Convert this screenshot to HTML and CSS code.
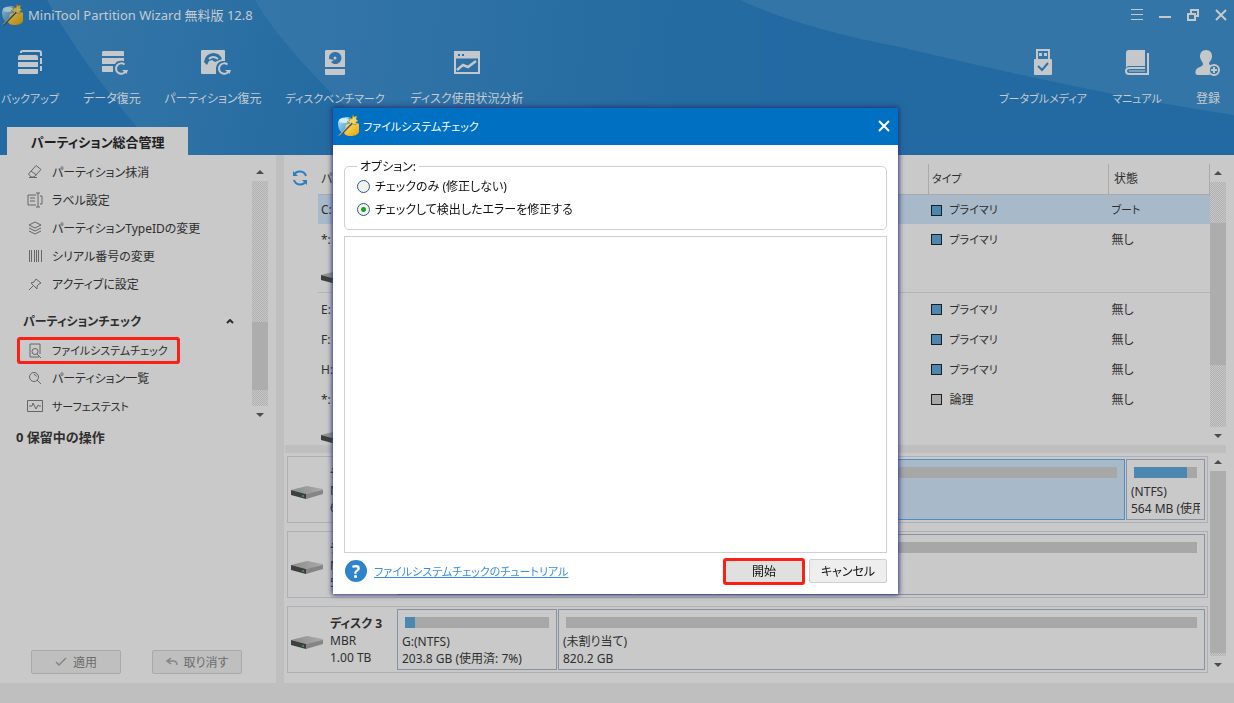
FILE: index.html
```html
<!DOCTYPE html>
<html lang="ja">
<head>
<meta charset="utf-8">
<title>MiniTool Partition Wizard</title>
<link rel="stylesheet" href="styles.css">
</head>
<body>
<svg width="0" height="0" class="defs" aria-hidden="true">
  <defs>
    <linearGradient id="gold" x1="0" y1="0" x2="1" y2="1"><stop offset="0" stop-color="#ffe37a"/><stop offset="1" stop-color="#e6a400"/></linearGradient>
    <linearGradient id="ice" x1="0" y1="0" x2="1" y2="1"><stop offset="0" stop-color="#b9e4f7"/><stop offset="1" stop-color="#2f8fca"/></linearGradient>
    <linearGradient id="lid" x1="0" y1="0" x2="1" y2="0"><stop offset="0" stop-color="#8c8c8c"/><stop offset="1" stop-color="#ababab"/></linearGradient>
    <symbol id="logo" viewBox="0 0 22 22">
      <path d="M0 8c0-4 5-6 10-6l3 1v6l-4 8H3c-2-2-3-5-3-9z" fill="url(#ice)"/>
      <ellipse cx="6" cy="5.500" rx="5" ry="2.500" fill="#cfeefa"/>
      <path d="M8 10c3-2 11-3 13-1v8c-1 3-5 4-9 4-3 0-5-1-6-3z" fill="url(#gold)"/>
      <path d="M15 0l1 2 3-1-1 3 2 2-2 1v3l-3-1-4 2 1-3-3-1 3-2-1-2 3 1z" fill="#ead66a" stroke="#a8851c" stroke-width=".6"/>
      <path d="M1.500 21L14 8" stroke="#55554c" stroke-width="2"/>
      <path d="M1 20.500L13.500 7.500" stroke="#dcdcd2" stroke-width=".9"/>
    </symbol>
    <symbol id="drive" viewBox="0 0 32 13">
      <path d="M0 4L16 0l16 3v2L15 8z" fill="url(#lid)"/>
      <path d="M0 4l15 4v5L0 9z" fill="#3d3f3e"/>
      <path d="M15 8l17-4v4l-17 5z" fill="#858585"/>
      <path d="M12 9v2" stroke="#37a84c" stroke-width="1.500"/>
    </symbol>
    <symbol id="redo" viewBox="0 0 14 14">
      <path d="M10.500 2.500A5.200 5.200 0 1 0 11.500 9.500" fill="none" stroke="#c5c8cb" stroke-width="2"/>
      <path d="M8 8h6l-1.500 4z" fill="#c5c8cb"/>
    </symbol>
    <symbol id="up" viewBox="0 0 8 4"><path d="M0 4L4 0l4 4z" fill="#4c4c4c"/></symbol>
    <symbol id="down" viewBox="0 0 8 4"><path d="M0 0h8L4 4z" fill="#4c4c4c"/></symbol>
  </defs>
</svg>

<div class="app">
  <header class="header">
    <svg class="swoosh" viewBox="0 0 1234 155" preserveAspectRatio="none" aria-hidden="true">
      <defs>
        <linearGradient id="s1" gradientUnits="userSpaceOnUse" x1="60" y1="0" x2="340" y2="60"><stop offset="0" stop-color="#3475a6"/><stop offset=".4" stop-color="#2f72a5"/><stop offset="1" stop-color="#246ba1"/></linearGradient>
        <linearGradient id="s2" gradientUnits="userSpaceOnUse" x1="270" y1="0" x2="680" y2="40"><stop offset="0" stop-color="#3576a8"/><stop offset="1" stop-color="#246ba1"/></linearGradient>
      </defs>
      <path d="M47 0Q80 60 137 127L170 155H760V0z" fill="url(#s1)"/>
      <path d="M255 0Q285 52 375 135L400 155H760V0z" fill="url(#s2)"/>
      <path d="M740 0Q800 28 900 47Q1100 95 1234 115V0z" fill="#3375a6"/>
    </svg>
    <div class="titlebar">
      <svg class="logo dim"><use href="#logo"/></svg>
      <h1 class="app-title">MiniTool Partition Wizard 無料版 12.8</h1>
      <div class="window-buttons">
        <button class="win" aria-label="メニュー"><svg width="12" height="12"><path d="M0 .5h12M0 5.500h12M0 10.500h12" stroke="#c5c9cc"/></svg></button>
        <button class="win" aria-label="最小化"><svg width="12" height="12"><path d="M0 8h12" stroke="#c8c8c8" stroke-width="2"/></svg></button>
        <button class="win" aria-label="元に戻す"><svg width="12" height="12" fill="none" stroke="#c8c8c8" stroke-width="2"><path d="M1 5h7v6H1zM4 4V1h7v6H9"/></svg></button>
        <button class="win" aria-label="閉じる"><svg width="12" height="12"><path d="M1 1l10 10M11 1L1 11" stroke="#c8c8c8" stroke-width="2"/></svg></button>
      </div>
    </div>
    <nav class="toolbar">
      <button class="tool t-backup kana"><svg width="26" height="28" fill="#c5c8cb"><path d="M3 6h16q2 0 2 2v3H1V8q0-2 2-2zM1 13h20v5H1zM1 20h20v4q0 1-1 1H2q-1 0-1-1z"/><path d="M4 4V3q0-1 2-1h16q2 0 2 2v3M24 9v6M24 17v5" fill="none" stroke="#c5c8cb" stroke-width="2"/></svg><span>バックアップ</span></button>
      <button class="tool t-data"><svg width="28" height="28" fill="#c5c8cb"><path d="M2 2h20q1 0 1 1v4H1V3zM1 9h22v3q-7-1-9 3H1zM1 17h11v6H2q-1 0-1-1z"/><use href="#redo" x="13" y="13" width="14" height="14"/></svg><span>データ復元</span></button>
      <button class="tool t-part"><svg width="32" height="28" fill="#c5c8cb"><path fill-rule="evenodd" d="M2 1h22q1 0 1 1v10q-8-1-9 7v6H2q-1 0-1-1V2zM4 13q1-8 9-9 7 0 9 6l-7 3-3-2-3 1-2 4z"/><path d="M9 10q4-4 9 0" fill="none" stroke="#c5c8cb" stroke-width="2"/><use href="#redo" x="17" y="13" width="14" height="14"/></svg><span>パーティション復元</span></button>
      <button class="tool t-bench kana"><svg width="20" height="28" fill="#c5c8cb"><path fill-rule="evenodd" d="M1 1h18q1 0 1 1v16H0V2zM10 3a6 6 0 1 1-4 10l3-2-5-1a6 6 0 0 1 6-7z"/><circle cx="10" cy="9" r="1.500"/><path d="M0 20h20v5q0 1-1 1H1q-1 0-1-1z"/></svg><span>ディスクベンチマーク</span></button>
      <button class="tool t-usage"><svg width="26" height="28" fill="none" stroke="#c5c8cb"><rect x="1" y="3" width="24" height="21" stroke-width="2"/><path d="M1 6h24" stroke-width="7"/><path d="M3 21l6-5 5 2 8-6" stroke-width="2.500"/><path d="M4 6h2M8 6h2" stroke="#2c70a4" stroke-width="2"/></svg><span>ディスク使用状況分析</span></button>
      <button class="tool t-media kana"><svg width="20" height="28" fill="#c5c8cb"><path fill-rule="evenodd" d="M3 0h14v10h1q1 0 1 1v14q0 1-1 1H2q-1 0-1-1V11q0-1 1-1h1zM5 2v8h10V2z"/><path d="M6 4h3v3H6zM11 4h3v3h-3z"/><path d="M5 17l4 4 6-7" fill="none" stroke="#2f73a5" stroke-width="2"/></svg><span>ブータブルメディア</span></button>
      <button class="tool t-manual kana"><svg width="24" height="28" fill="none" stroke="#c5c8cb"><path fill="#c5c8cb" stroke="none" d="M4 1h16v16H4q-3 0-3 3V4q0-3 3-3z"/><path d="M23 4v21H4q-3 0-3-3 0-3 4-3h15" stroke-width="2"/><path d="M4 22h16" stroke-width="1"/></svg><span>マニュアル</span></button>
      <button class="tool t-login"><svg width="26" height="28" fill="#c5c8cb"><path d="M11 1c4 0 6 3 6 6 0 4-2 5-3 7 0 2 2 3 4 3-4 2-5 6-3 9H3c-3 0-3-3-2-5 1-3 7-3 7-6 0-2-3-4-3-8 0-3 2-6 6-6z"/><circle cx="19" cy="21" r="5" fill="#3375a6" stroke="#c5c8cb" stroke-width="2"/><path d="M16 21h6M19 18v6" stroke="#c5c8cb" stroke-width="2"/></svg><span>登録</span></button>
    </nav>
    <div class="tab">パーティション総合管理</div>
  </header>

  <div class="workspace">
    <aside class="sidebar">
      <div class="side-scroll">
        <ul class="menu">
          <li><button class="item"><svg class="ico" viewBox="0 0 16 16"><path d="M1.500 10L9 1.500l5 4L7 13H4zM4 7l5.500 4M2 13.500h8"/></svg>パーティション抹消</button></li>
          <li><button class="item"><svg class="ico" viewBox="0 0 16 16"><path d="M9 3H1v10h8M3 6h5M3 9h5M11 1v14M9 1h4M9 15h4M13 4h2v8h-2"/></svg>ラベル設定</button></li>
          <li><button class="item"><svg class="ico" viewBox="0 0 16 16"><path d="M2 5l6-3 6 3-6 3zM2 8l6 3 6-3M2 11l6 3 6-3"/></svg>パーティションTypeIDの変更</button></li>
          <li><button class="item"><svg class="ico" viewBox="0 0 16 16"><path d="M2.500 2v12M4.500 2v12M7.500 2v12M9.500 2v12M11.500 2v12M14.500 2v12"/></svg>シリアル番号の変更</button></li>
          <li><button class="item"><svg class="ico" viewBox="0 0 16 16"><path d="M9 3l5 4-2 1-2 2v3L4 7l3-1zM6 10l-4 4"/></svg>アクティブに設定</button></li>
        </ul>
        <h2 class="group">パーティションチェック<svg width="8" height="5"><path d="M1 4l3-3 3 3" fill="none" stroke="#2e2e2e" stroke-width="2"/></svg></h2>
        <ul class="menu">
          <li><button class="item marked kana"><svg class="ico" viewBox="0 0 16 16"><path d="M12 14H3V1h10v10"/><circle cx="8" cy="8.500" r="3"/><path d="M10 11l4 4"/></svg>ファイルシステムチェック</button></li>
          <li><button class="item"><svg class="ico" viewBox="0 0 16 16"><circle cx="7" cy="7" r="4.500"/><path d="M10 10l4 4M7 4.500a3 3 0 0 1 2.500 2"/></svg>パーティション一覧</button></li>
          <li><button class="item kana"><svg class="ico" viewBox="0 0 16 16"><path d="M.5 2.500h15v11H.5zM2 8h3l1-3 3 6 2-4 1 1h2"/></svg>サーフェステスト</button></li>
        </ul>
        <div class="scrollbar sb-side"><svg class="arr"><use href="#up"/></svg><div class="track"><i class="gap-a"></i><i class="thumb"></i><i class="gap-b"></i></div><svg class="arr"><use href="#down"/></svg></div>
      </div>
      <p class="pending">0 保留中の操作</p>
      <div class="side-actions">
        <button class="flat" disabled><svg width="12" height="10"><path d="M1 5l3 3 7-7" fill="none" stroke="#858585" stroke-width="1.500"/></svg>適用</button>
        <button class="flat" disabled><svg width="12" height="10"><path d="M5 1L1 4l4 3M1 4h6q4 0 4 4" fill="none" stroke="#858585" stroke-width="1.500"/></svg>取り消す</button>
      </div>
    </aside>
    <div class="v-split"></div>

    <main class="content">
      <section class="list-pane">
        <button class="refresh" aria-label="更新"><svg width="18" height="18" fill="none" stroke="#2c7fbf" stroke-width="2"><path d="M15 7A6.500 6.500 0 0 0 3 6M3 11a6.500 6.500 0 0 0 12 1"/><path d="M2 2v5h5zM16 16v-5h-5z" fill="#2c7fbf" stroke="none"/></svg></button>
        <table class="parts">
          <thead><tr><th class="c1">パーティション</th><th class="c2 kana">タイプ</th><th class="c3">状態</th></tr></thead>
          <tbody>
            <tr class="sel"><td>C:</td><td class="kana"><i class="sq"></i>プライマリ</td><td class="kana">ブート</td></tr>
            <tr><td>*:</td><td class="kana"><i class="sq"></i>プライマリ</td><td>無し</td></tr>
            <tr class="disk-row"><td colspan="3"><svg class="drive"><use href="#drive"/></svg></td></tr>
            <tr><td>E:</td><td class="kana"><i class="sq"></i>プライマリ</td><td>無し</td></tr>
            <tr><td>F:</td><td class="kana"><i class="sq"></i>プライマリ</td><td>無し</td></tr>
            <tr><td>H:</td><td class="kana"><i class="sq"></i>プライマリ</td><td>無し</td></tr>
            <tr><td>*:</td><td><i class="sq grey"></i>論理</td><td>無し</td></tr>
            <tr class="disk-row last"><td colspan="3"><svg class="drive"><use href="#drive"/></svg></td></tr>
          </tbody>
        </table>
        <div class="scrollbar sb-list"><svg class="arr"><use href="#up"/></svg><div class="track"><i class="gap-a"></i><i class="thumb"></i><i class="gap-b"></i></div><svg class="arr"><use href="#down"/></svg></div>
      </section>
      <div class="h-split"></div>
      <section class="map-pane">
        <div class="disks">
          <article class="disk">
            <svg class="drive"><use href="#drive"/></svg>
            <div class="disk-info"><b>ディスク 1</b><span>MBR</span><span>60.00 GB</span></div>
            <div class="map m1">
              <div class="part active"><div class="bar"></div></div>
              <div class="part"><div class="bar"><i style="width:84%"></i></div><span>(NTFS)</span><span>564 MB (使用済: 84%)</span></div>
            </div>
          </article>
          <article class="disk">
            <svg class="drive"><use href="#drive"/></svg>
            <div class="disk-info"><b>ディスク 2</b><span>MBR</span><span>500.00 GB</span></div>
            <div class="map m2">
              <div class="part"><div class="bar"></div></div><div class="part"><div class="bar"></div></div><div class="part"><div class="bar"></div></div><div class="part"><div class="bar"></div></div>
            </div>
          </article>
          <article class="disk">
            <svg class="drive"><use href="#drive"/></svg>
            <div class="disk-info"><b>ディスク 3</b><span>MBR</span><span>1.00 TB</span></div>
            <div class="map m3">
              <div class="part"><div class="bar"><i style="width:7%"></i></div><span>G:(NTFS)</span><span>203.8 GB (使用済: 7%)</span></div>
              <div class="part"><div class="bar"></div><span>(未割り当て)</span><span>820.2 GB</span></div>
            </div>
          </article>
        </div>
        <div class="scrollbar sb-map"><svg class="arr"><use href="#up"/></svg><div class="track"><i class="thumb"></i><i class="gap-b"></i></div><svg class="arr"><use href="#down"/></svg></div>
      </section>
    </main>
  </div>
  <footer class="status"></footer>
</div>

<div class="overlay">
  <div class="dialog" role="dialog" aria-labelledby="dlg-title">
    <div class="dlg-bar">
      <svg class="logo"><use href="#logo"/></svg>
      <h2 id="dlg-title" class="kana">ファイルシステムチェック</h2>
      <button class="win" aria-label="閉じる"><svg width="12" height="12"><path d="M1 1l10 10M11 1L1 11" stroke="#fff" stroke-width="2"/></svg></button>
    </div>
    <form class="dlg-body">
      <fieldset class="options">
        <legend>オプション:</legend>
        <label><input type="radio" name="mode">チェックのみ (修正しない)</label>
        <label><input type="radio" name="mode" checked>チェックして検出したエラーを修正する</label>
      </fieldset>
      <textarea class="log" readonly aria-label="ログ"></textarea>
      <div class="dlg-foot">
        <span class="help" aria-hidden="true">?</span>
        <a href="#" class="kana">ファイルシステムチェックのチュートリアル</a>
        <button type="button" class="btn primary">開始</button>
        <button type="button" class="btn">キャンセル</button>
      </div>
    </form>
  </div>
</div>
</body>
</html>
```
FILE: styles.css
```css
* { box-sizing: border-box; }
html, body { height: 100%; margin: 0; }
body {
  font: 12px/17px "Noto Sans", "Noto Sans CJK JP", sans-serif;
  font-feature-settings: "palt";
  color: #2e2e2e;
  background: #c9c9c9;
  overflow: hidden;
}
button, input, textarea { font: inherit; font-feature-settings: inherit; color: inherit; margin: 0; }
button { background: none; border: 0; padding: 0; white-space: nowrap; }
h1, h2, p, ul { margin: 0; padding: 0; font-size: inherit; list-style: none; }
svg { display: block; flex: none; }
i { display: block; }
.defs { position: absolute; }
.kana { font-size: 11px; }

.app { display: flex; flex-direction: column; height: 100vh; }

.header { position: relative; display: flex; flex-direction: column; flex: none; height: 155px; background: #236aa2; color: #c5cbd0; }
.swoosh { position: absolute; inset: 0; width: 100%; height: 100%; }
.titlebar, .toolbar, .tab { position: relative; }
.titlebar { display: flex; align-items: center; height: 30px; padding: 0 7px 0 2px; gap: 4px; }
.logo { width: 22px; height: 22px; }
.dim { filter: brightness(.8); }
.app-title { font-size: 13px; font-weight: 400; }
.window-buttons { display: flex; gap: 16px; margin-left: auto; }
.win { display: grid; place-items: center; width: 12px; height: 20px; }

.toolbar { display: flex; flex: 1; }
.tool { display: flex; flex-direction: column; align-items: center; justify-content: flex-start; padding-top: 19px; gap: 13px; flex: none; }
.t-backup { width: 60px; }
.t-data { width: 104px; }
.t-part { width: 98px; }
.t-data svg, .t-part svg { margin-left: 6px; }
.t-bench { width: 146px; }
.t-usage { width: 118px; }
.t-media { width: 98px; margin-left: auto; }
.t-manual { width: 90px; }
.t-login { width: 52px; }

.tab { align-self: flex-start; margin-left: 7px; height: 28px; padding-left: 24px; width: 181px; background: #c9c9c9; color: #1f1f1f; font-size: 13px; font-weight: 700; line-height: 30px; white-space: nowrap; }

.workspace { display: flex; flex: 1; min-height: 0; }
.sidebar { display: flex; flex-direction: column; width: 276px; flex: none; }
.side-scroll { position: relative; padding: 3px 36px 0 17px; height: 269px; }
.item { display: flex; align-items: center; gap: 9px; width: 100%; height: 28px; padding: 0 10px; text-align: left; }
.item.marked { width: 163px; height: 27px; padding: 0 7px; border: 3px solid #fb2015; border-radius: 3px; }
.ico { width: 16px; height: 16px; fill: none; stroke: #666; }
.group { display: flex; justify-content: space-between; align-items: center; height: 39px; padding: 8px 6px 0 6px; font-weight: 700; }

.scrollbar { display: flex; flex-direction: column; align-items: center; width: 16px; }
.arr { width: 8px; height: 4px; margin: 7px 0; }
.track { display: flex; flex-direction: column; flex: 1; width: 100%; background: repeating-conic-gradient(#b1b1b1 0 25%, #c6c6c6 0 50%) 0 0 / 2px 2px; }
.thumb { background: #adadad; }
.sb-side { position: absolute; right: 8px; top: 8px; bottom: 0; }
.sb-side .gap-a { flex: 140; } .sb-side .thumb { flex: 67; } .sb-side .gap-b { flex: 16; }
.sb-list .gap-a { flex: 41; } .sb-list .thumb { flex: 142; } .sb-list .gap-b { flex: 62; }
.sb-map .thumb { flex: 181; } .sb-map .gap-b { flex: 3; }

.pending { padding: 5px 16px; font-size: 13px; font-weight: 700; }
.side-actions { display: flex; gap: 31px; margin-top: auto; padding: 0 31px 9px; }
.flat { display: flex; align-items: center; justify-content: center; gap: 6px; width: 90px; height: 24px; background: #bfbfbf; border: 1px solid #a9a9a9; border-radius: 2px; color: #6c6c6c; }
.v-split { width: 8px; flex: none; background: #bfbfbf; }

.content { display: flex; flex-direction: column; flex: 1; min-width: 0; padding: 0 8px 0 1px; }
.list-pane { display: flex; height: 290px; flex: none; padding-top: 9px; overflow: hidden; }
.refresh { width: 18px; height: 18px; margin: 5px 9px 0 6px; flex: none; }
.parts { flex: 1; width: 0; height: 0; border-collapse: collapse; table-layout: fixed; }
.parts th { height: 30px; padding: 0 3px; font-weight: 400; text-align: left; border-right: 1px solid #aaa; border-bottom: 1px solid #aaa; }
.parts .c2 { width: 180px; } .parts .c3 { width: 101px; padding-left: 5px; }
.parts td { height: 30px; padding: 1px 3px 0; }
.parts td + td { padding-left: 21px; position: relative; }
.parts td + td + td { padding-left: 3px; }
.parts .sel { background: #a8b9ca; }
.parts .disk-row td { height: 40px; padding: 6px 3px 0; background: linear-gradient(#b5b5b5, #b5b5b5) 0 38px / 100% 1px no-repeat; }
.parts .last td { background: none; }
.drive { width: 32px; height: 13px; }
.sq { position: absolute; left: 2px; top: 10px; width: 11px; height: 11px; border: 1px solid #1e1e1e; background: #4b87b0; }
.sq.grey { background: #a7a7a7; }
.sb-list, .sb-side, .sb-map { flex: none; }

.h-split { height: 8px; background: #bfbfbf; flex: none; }
.map-pane { display: flex; flex: 1; gap: 2px; padding: 0 0 9px 2px; }
.disks { display: flex; flex-direction: column; gap: 8px; flex: 1; min-width: 0; padding-top: 3px; }
.disk { display: flex; align-items: center; height: 67px; padding: 2px; border: 1px solid #adb0b7; }
.disk .drive { margin: 6px 7px 0 1px; }
.disk-info { display: flex; flex-direction: column; width: 67px; padding-top: 2px; flex: none; white-space: nowrap; }
.map { display: grid; gap: 1px; flex: 1; height: 61px; min-width: 0; }
.m1 { grid-template-columns: 1fr 79px; }
.m2 { grid-template-columns: 156px 79px 79px 1fr; }
.m3 { grid-template-columns: 160px 1fr; }
.part { display: flex; flex-direction: column; min-width: 0; padding: 7px 4px 0; border: 1px solid #8892a0; }
.part.active { background: #a8b9ca; border-color: #4a8fc6; }
.part span { overflow: hidden; white-space: nowrap; }
.bar { height: 11px; margin: 0 3px 5px; background: #a7a7a7; }
.bar i { height: 100%; background: #4b87b0; }

.status { height: 20px; flex: none; background: #bfbfbf; }

.overlay { position: fixed; inset: 0; display: grid; place-items: center; padding: 0 3px 2px 0; }
.dialog { display: flex; flex-direction: column; width: 565px; background: #fff; color: #111; box-shadow: 0 0 5px 1px #2b2f72; }
.dlg-bar { display: flex; align-items: center; gap: 3px; height: 37px; padding: 0 8px 0 5px; background: #0070c2; color: #fff; }
.dlg-bar h2 { font-weight: 400; }
.dlg-bar .win { margin-left: auto; }
.dlg-body { display: flex; flex-direction: column; padding: 13px 11px 9px; }
.options { display: flex; flex-direction: column; gap: 6px; margin: 0; padding: 3px 12px 11px; border: 1px solid #cfcfcf; border-radius: 5px; }
.options legend { padding: 0 3px; }
.options label { display: flex; align-items: center; gap: 5px; }
.options input { appearance: none; width: 13px; height: 13px; border: 1px solid #2b5680; border-radius: 50%; background: #f1f1ee; }
.options input:checked { background: radial-gradient(circle, #21a121 0 2px, #f1f1ee 3px); }
.log { height: 317px; margin-top: 6px; border: 1px solid #cfcfcf; background: #fff; resize: none; outline: 0; }
.dlg-foot { display: flex; align-items: center; gap: 4px; padding-top: 5px; }
.help { display: grid; place-items: center; width: 22px; height: 22px; margin: 0 3px 0 1px; border-radius: 50%; background: #2f83cb; color: #fff; font-size: 17px; font-weight: 700; }
.dlg-foot a { color: #3a8de0; }
.btn { width: 78px; height: 24px; border: 1px solid #cfcfcf; border-radius: 2px; background: #eee; }
.primary { width: 82px; height: 27px; margin-left: auto; border: 3px solid #fb2015; border-radius: 3px; background: #e0e0e0; }
```
